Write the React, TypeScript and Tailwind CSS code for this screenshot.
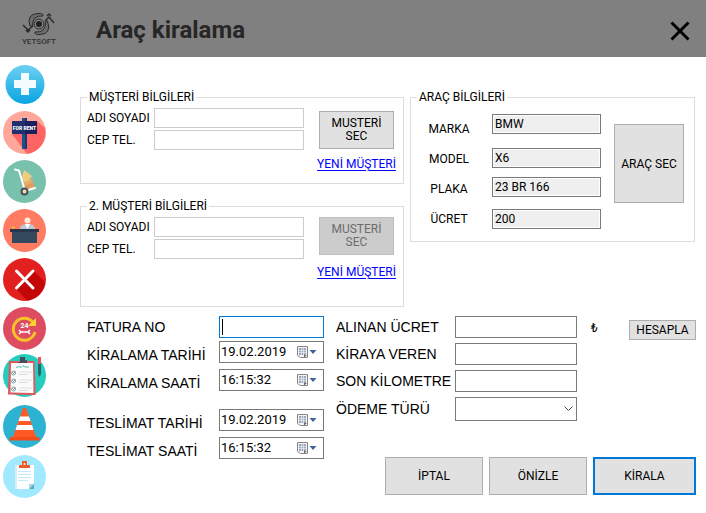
import type { ReactNode } from 'react';

const labelFont = "font-['Liberation_Sans',Arial,sans-serif]";

function Disc({ fill }: { fill: string }) {
  return <circle cx="21.5" cy="21.5" r="21.5" fill={fill} />;
}

const sideItems: { name: string; art: ReactNode }[] = [
  {
    name: 'Ekle',
    art: (
      <>
        <defs>
          <linearGradient id="add" x1="0" y1="0" x2="0" y2="1">
            <stop offset="0" stopColor="#6fd0f2" />
            <stop offset="1" stopColor="#08a4e2" />
          </linearGradient>
        </defs>
        <circle cx="22" cy="22.5" r="19.5" fill="url(#add)" />
        <path d="M18 11h8v7h7v8h-7v7h-8v-7h-7v-8h7z" fill="#f4fbfe" />
      </>
    ),
  },
  {
    name: 'Kiralık araçlar',
    art: (
      <>
        <Disc fill="#ffa79b" />
        <path d="M34 10L42 17A21.5 21.5 0 0 1 24 43L9 23z" fill="#ff6464" />
        <rect x="19" y="7" width="5" height="31" fill="#1d4f8c" />
        <rect x="22" y="7" width="2" height="31" fill="#173a70" />
        <rect x="9" y="10" width="25" height="13" fill="#1b1f5e" />
        <rect x="9" y="10" width="13" height="13" fill="#20306e" />
        <text x="21.5" y="18.5" textAnchor="middle" fontSize="5" fontWeight="900" fill="#fff" fontFamily="Roboto, sans-serif">
          FOR RENT
        </text>
      </>
    ),
  },
  {
    name: 'Teslimat',
    art: (
      <>
        <Disc fill="#78c2ad" />
        <path d="M21 10l8 6-5 7-6-3z" fill="#f0cb80" />
        <path d="M20 23l9-4 3 9-9 3z" fill="#e09c5c" />
        <path d="M20 23l9-4 1 3-9 4z" fill="#e8ac6c" />
        <path d="M12 9.500l4 1L22 31l10-3" fill="none" stroke="#fff" strokeWidth="2" strokeLinecap="round" />
        <circle cx="21.500" cy="31.500" r="3" fill="#f3dba0" stroke="#44525f" strokeWidth="2" />
      </>
    ),
  },
  {
    name: 'Resepsiyon',
    art: (
      <>
        <Disc fill="#ff7b62" />
        <circle cx="24.500" cy="11.500" r="3" fill="#fbe9dc" />
        <path d="M17 21v-2q1-4 7.500-4t7.500 4v2z" fill="#bfc8d2" />
        <path d="M22 15h5l-2.500 5z" fill="#fff" />
        <circle cx="10.500" cy="18.500" r="1.500" fill="#f3b331" />
        <rect x="7" y="20" width="29" height="3" fill="#27364a" />
        <path d="M9 23h25v11h-25z" fill="#35495e" />
      </>
    ),
  },
  {
    name: 'Sil',
    art: (
      <>
        <Disc fill="#e32020" />
        <path d="M30.500 12.500L42 24A21.500 21.500 0 0 1 24.500 42.800L12.500 30.500z" fill="#c30606" />
        <path d="M13.500 13L30 30M30 13L13.500 30" stroke="#fff" strokeWidth="3" strokeLinecap="round" />
      </>
    ),
  },
  {
    name: 'Servis',
    art: (
      <>
        <Disc fill="#dd4c61" />
        <path d="M30 15.500A11 11 0 1 0 32 25" fill="none" stroke="#f9c22b" strokeWidth="3" />
        <path d="M33 11v8h-8z" fill="#fbd331" />
        <text x="21.500" y="20.500" textAnchor="middle" fontSize="7" fontWeight="700" fill="#fff" fontFamily="Roboto, sans-serif">
          24
        </text>
        <path d="M16 23l2 2-2 2M27 23l-2 2 2 2M18 25h7" fill="none" stroke="#fff" strokeWidth="1.500" />
      </>
    ),
  },
  {
    name: 'Sözleşmeler',
    art: (
      <>
        <circle cx="21.500" cy="19.500" r="21.500" fill="#25cdbd" />
        <path d="M6 5h25.500l1 34L5 38.500z" fill="#e55560" />
        <path d="M8 7h22l.5 30L7.500 36.500z" fill="#fbfbfb" />
        <path d="M15 6h2V1h5v3h2v3h-9z" fill="#47505a" />
        <path d="M13 11.500l3-1 2 1 2-2 2 1.500h4" fill="none" stroke="#54b9ac" />
        <g fill="none" stroke="#55bcb0">
          <circle cx="10.500" cy="17" r="2" />
          <circle cx="10.500" cy="25" r="2" />
          <circle cx="10.500" cy="33" r="2" />
        </g>
        <path d="M9.500 16.500l1 1 2-2M9.500 24.500l1 1 2-2M9.500 32.500l1 1 2-2" fill="none" stroke="#e55560" />
        <path d="M16 16h13M16 18.500h9M16 24h13M16 26.500h9M16 32h13M16 34.500h9" stroke="#dcdcdc" />
        <path d="M35 1h3v7h-3z" fill="#e55560" />
        <path d="M35 8h3v10l-1.500 3-1.500-3z" fill="#27666d" />
      </>
    ),
  },
  {
    name: 'Yol yardımı',
    art: (
      <>
        <Disc fill="#2cb3d2" />
        <path d="M20 3h3L33.500 33h-24z" fill="#ff5a26" />
        <path d="M17 11.500h9l1.500 4.500h-12z" fill="#fff" />
        <path d="M14 20h15l1.500 5h-18z" fill="#fff" />
        <path d="M7 32h29l1 3.500H6z" fill="#f24d1b" />
      </>
    ),
  },
  {
    name: 'Raporlar',
    art: (
      <>
        <circle cx="21.500" cy="22.500" r="21.500" fill="#a1e9ff" />
        <path d="M12 11h19v19l-5 5H12z" fill="#fff" />
        <path d="M12 11h2v24h-2z" fill="#dcecf4" />
        <path d="M31 29.500v5.500h-5z" fill="#5aa9bd" />
        <path d="M26 30h5l-5 5z" fill="#a9d5e3" />
        <path d="M15 17.500h13M15 20.500h13M15 23.500h13M15 26.500h10" stroke="#c3e9f5" />
        <path d="M16 14v-3h3V7h5v4h3v3z" fill="#f05a28" />
        <circle cx="21.500" cy="10" r="1" fill="#fff" />
      </>
    ),
  },
];

function Logo() {
  return (
    <div className="flex w-10 flex-col items-center">
      <svg width="34" height="26" viewBox="0 0 34 26" fill="none" stroke="#2b2b2b" aria-hidden="true">
        <path d="M8 15Q4 3 16 2.500Q22 2 21 5Q10 4 10.500 15z" fill="#6c6c6c" />
        <path d="M25.500 10Q30 23 18 23.500Q12 24 13 21Q24 22 23.500 11z" fill="#6c6c6c" />
        <circle cx="17" cy="13" r="5" fill="#808080" />
        <circle cx="17" cy="13" r="3" fill="#202020" stroke="none" />
        <path d="M1 14l5 5 5-4M4 19l2 2 2-2M23 10l4-4 5 6M25 5l2-2 2 2" strokeWidth="1.500" />
      </svg>
      <span className="font-['Roboto',sans-serif] text-[8px] leading-[10px] font-medium text-[#303030]">YETSOFT</span>
    </div>
  );
}

function CustomerGroup({
  id,
  title,
  disabled,
  bodyClass,
  actionClass,
}: {
  id: string;
  title: string;
  disabled?: boolean;
  bodyClass: string;
  actionClass: string;
}) {
  return (
    <fieldset className="min-w-0 border border-[#dcdcdc]">
      <legend className="ml-[6px] px-[2px] leading-[15px]">{title}</legend>
      <div className={`flex gap-[14px] pt-[3px] pr-2 pl-[6px] ${bodyClass}`}>
        <div className="flex min-w-0 flex-1 flex-col gap-[2px]">
          <div className="flex items-center">
            <label htmlFor={`${id}-name`} className="w-[67px] shrink-0">ADI SOYADI</label>
            <input id={`${id}-name`} className="h-5 min-w-0 flex-1 border border-[#cccccc] bg-white px-[3px] outline-none" />
          </div>
          <div className="flex items-center">
            <label htmlFor={`${id}-phone`} className="w-[67px] shrink-0">CEP TEL.</label>
            <input id={`${id}-phone`} className="h-5 min-w-0 flex-1 border border-[#cccccc] bg-white px-[3px] outline-none" />
          </div>
        </div>
        <div className={`flex w-[77px] shrink-0 flex-col items-center ${actionClass}`}>
          <button
            type="button"
            disabled={disabled}
            className="h-[38px] w-[75px] border border-[#adadad] bg-[#e1e1e1] px-2 leading-[13px] disabled:border-[#bfbfbf] disabled:bg-[#cccccc] disabled:text-[#6d6d6d]"
          >
            MUSTERİ SEC
          </button>
          <a href="#yeni-musteri" className="leading-4 whitespace-nowrap text-[#0000ff] underline underline-offset-2">YENİ MÜŞTERİ</a>
        </div>
      </div>
    </fieldset>
  );
}

const vehicleFields = [
  { id: 'marka', label: 'MARKA', value: 'BMW', space: '' },
  { id: 'model', label: 'MODEL', value: 'X6', space: 'mt-[14px]' },
  { id: 'plaka', label: 'PLAKA', value: '23 BR 166', space: 'mt-[9px]' },
  { id: 'ucret', label: 'ÜCRET', value: '200', space: 'mt-3' },
];

function VehicleGroup() {
  return (
    <fieldset className="min-w-0 self-start border border-[#dcdcdc] pb-3">
      <legend className="ml-[6px] px-[2px] leading-[15px]">ARAÇ BİLGİLERİ</legend>
      <div className="flex pt-[9px] pr-[10px] pl-[18px]">
        <div className="flex w-10 flex-col items-center gap-[14px] pt-[7px]">
          {vehicleFields.map((f) => (
            <label key={f.id} htmlFor={f.id} className="leading-4">{f.label}</label>
          ))}
        </div>
        <div className="ml-[23px] flex min-w-0 flex-1 flex-col">
          {vehicleFields.map((f) => (
            <input
              key={f.id}
              id={f.id}
              readOnly
              value={f.value}
              className={`h-5 w-full border border-[#7a7a7a] bg-[#efefef] px-[2px] shadow-[inset_0_0_0_1px_#ffffff] outline-none ${f.space}`}
            />
          ))}
        </div>
        <button type="button" className="mt-[10px] ml-[13px] h-[79px] w-[70px] shrink-0 border border-[#adadad] bg-[#e1e1e1]">
          ARAÇ SEC
        </button>
      </div>
    </fieldset>
  );
}

function PickerIcon() {
  return (
    <svg width="22" height="14" viewBox="0 0 22 14" aria-hidden="true">
      <path d="M1.500 1.500h10v11h-7l-3-2z" fill="#f5f5f5" stroke="#8a8580" />
      <path d="M3 3h7v7H3z" fill="#9aa6bb" />
      <path d="M3 5.500h7M3 7.500h7M5.500 3v7M7.500 3v7" stroke="#eef1f6" strokeWidth=".7" />
      <path d="M8 12.500v-2.500h3z" fill="#5f6470" />
      <path d="M13.500 5h7L17 9z" fill="#45619d" />
    </svg>
  );
}

const dateRows = [
  { id: 'kt', label: 'KİRALAMA TARİHİ', value: '19.02.2019', space: 'mt-[3px]' },
  { id: 'ks', label: 'KİRALAMA SAATİ', value: '16:15:32', space: 'mt-[6px]' },
  { id: 'tt', label: 'TESLİMAT TARİHİ', value: '19.02.2019', space: 'mt-[18px]' },
  { id: 'ts', label: 'TESLİMAT SAATİ', value: '16:15:32', space: 'mt-[6px]' },
];

const textRows = [
  { id: 'alinan', label: 'ALINAN ÜCRET' },
  { id: 'veren', label: 'KİRAYA VEREN' },
  { id: 'km', label: 'SON KİLOMETRE' },
];

export default function App() {
  return (
    <div className="min-h-screen bg-white font-['Roboto',sans-serif] text-[12px] text-black">
      <header className="flex h-[57px] items-center bg-[#808080] pr-4 pl-[19px]">
        <Logo />
        <h1 className="ml-[37px] flex-1 pt-[2px] text-[24px] leading-8 font-bold text-[#262626]">Araç kiralama</h1>
        <button type="button" aria-label="Kapat" className="pt-[5px]">
          <svg width="20" height="20" viewBox="0 0 20 20" aria-hidden="true">
            <path d="M1.500 1.500l17 17M18.500 1.500l-17 17" stroke="#000" strokeWidth="3" />
          </svg>
        </button>
      </header>

      <div className="flex">
        <nav className="flex w-20 shrink-0 flex-col gap-[6px] pt-[5px] pl-[3px]">
          {sideItems.map((item) => (
            <button key={item.name} type="button" aria-label={item.name} className="size-[43px]">
              <svg width="43" height="43" viewBox="0 0 43 43" className="overflow-visible" aria-hidden="true">
                {item.art}
              </svg>
            </button>
          ))}
        </nav>

        <main className="min-w-0 flex-1 pt-[33px] pr-[10px]">
          <div className="grid grid-cols-[324fr_285fr] gap-[6px] pr-px">
            <div className="flex min-w-0 flex-col gap-[15px]">
              <CustomerGroup id="c1" title="MÜŞTERİ BİLGİLERİ" bodyClass="pb-[11px]" actionClass="gap-[7px] pt-[3px]" />
              <CustomerGroup id="c2" title="2. MÜŞTERİ BİLGİLERİ" disabled bodyClass="pb-[26px]" actionClass="gap-[9px]" />
            </div>
            <VehicleGroup />
          </div>

          <div className="mt-[9px] flex gap-3 pl-[7px]">
            <div className={`w-[237px] shrink-0 text-[14px] ${labelFont}`}>
              <div className="flex items-center">
                <label htmlFor="fatura" className="w-[132px] leading-4">FATURA NO</label>
                <div className="flex h-[22px] min-w-0 flex-1 items-center border border-[#0078d7] pl-[2px]">
                  <span className="h-4 w-px bg-black" />
                  <input id="fatura" className="min-w-0 flex-1 outline-none" />
                </div>
              </div>
              {dateRows.map((r) => (
                <div key={r.id} className={`flex items-end ${r.space}`}>
                  <label htmlFor={r.id} className="w-[132px] leading-4 whitespace-nowrap">{r.label}</label>
                  <div className="flex h-[22px] min-w-0 flex-1 items-center border border-[#7a7a7a] pr-[5px] pl-px">
                    <input
                      id={r.id}
                      defaultValue={r.value}
                      className="min-w-0 flex-1 font-['Roboto',sans-serif] text-[13px] outline-none"
                    />
                    <button type="button" aria-label={`${r.label} seç`}>
                      <PickerIcon />
                    </button>
                  </div>
                </div>
              ))}
            </div>

            <div className="flex min-w-0 flex-1 flex-col">
              <div className="flex items-start">
                <div className={`flex min-w-0 flex-1 flex-col gap-[5px] text-[14px] ${labelFont}`}>
                  {textRows.map((r) => (
                    <div key={r.id} className="flex items-center">
                      <label htmlFor={r.id} className="w-[119px] shrink-0 leading-4 whitespace-nowrap">{r.label}</label>
                      <input id={r.id} className="h-[22px] min-w-0 flex-1 border border-[#7a7a7a] px-1 outline-none" />
                    </div>
                  ))}
                  <div className="flex items-center">
                    <label htmlFor="odeme" className="w-[119px] shrink-0 leading-4">ÖDEME TÜRÜ</label>
                    <div className="relative min-w-0 flex-1">
                      <select id="odeme" className="block h-6 w-full appearance-none border border-[#7a7a7a] bg-white px-1 outline-none">
                        <option value=""></option>
                      </select>
                      <svg
                        width="9"
                        height="6"
                        viewBox="0 0 9 6"
                        className="pointer-events-none absolute top-[9px] right-1"
                        aria-hidden="true"
                      >
                        <path d="M.5.500l4 4 4-4" fill="none" stroke="#555" />
                      </svg>
                    </div>
                  </div>
                </div>
                <span className="ml-[14px] w-[38px] pt-1 leading-4">₺</span>
                <button type="button" className="mt-1 h-5 w-[67px] shrink-0 border border-[#adadad] bg-[#e1e1e1] leading-4">
                  HESAPLA
                </button>
              </div>
              <div className="mt-9 flex justify-end gap-[6px]">
                <button type="button" className="h-[38px] w-[98px] border border-[#adadad] bg-[#e1e1e1]">İPTAL</button>
                <button type="button" className="h-[38px] w-[98px] border border-[#adadad] bg-[#e1e1e1]">ÖNİZLE</button>
                <button type="button" className="h-[38px] w-[103px] border-2 border-[#0078d7] bg-[#e1e1e1]">KİRALA</button>
              </div>
            </div>
          </div>
        </main>
      </div>
    </div>
  );
}
